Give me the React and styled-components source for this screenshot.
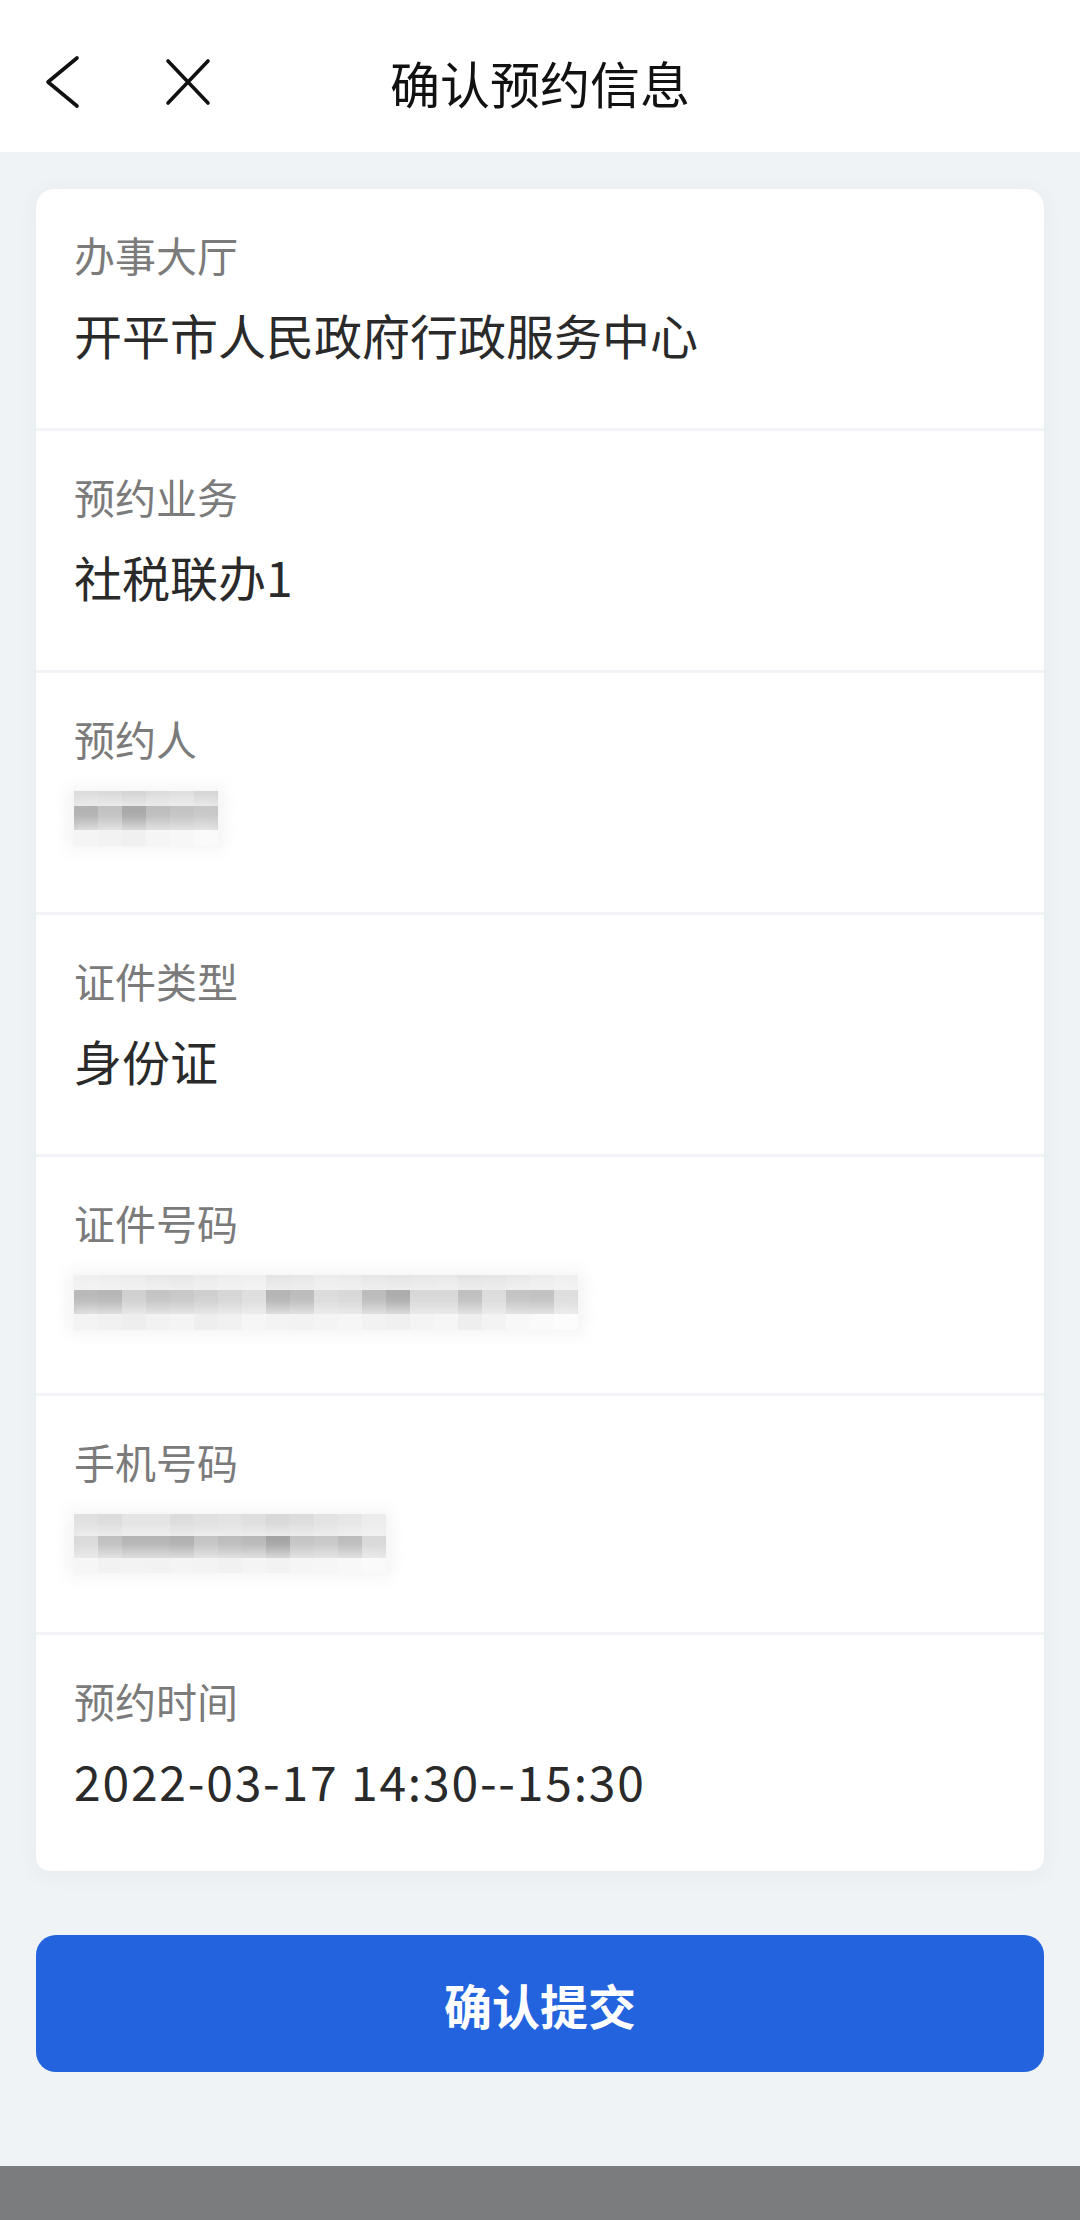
import React from 'react';
import styled, { createGlobalStyle } from 'styled-components';

const GlobalStyle = createGlobalStyle`
  html, body {
    margin: 0;
    padding: 0;
    background: #eff3f6;
  }
  body {
    font-family: "Noto Sans CJK SC", "Noto Sans", sans-serif;
  }
`;

const Page = styled.div`
  width: 1080px;
  min-height: 2220px;
  display: flex;
  flex-direction: column;
  background: #eff3f6;
`;

const Header = styled.header`
  height: 152px;
  box-sizing: border-box;
  padding-top: 12px;
  background: #ffffff;
  display: grid;
  grid-template-columns: 1fr auto 1fr;
  align-items: center;
`;

const NavIcons = styled.div`
  display: flex;
  align-items: center;
  gap: 84px;
  padding-left: 44px;
`;

const Title = styled.h1`
  margin: 0;
  font-size: 50px;
  font-weight: 400;
  color: #111111;
  line-height: 1;
`;

const Main = styled.main`
  flex: 1;
  padding: 37px 36px 0;
  display: flex;
  flex-direction: column;
  gap: 64px;
`;

const Card = styled.section`
  background: #ffffff;
  border-radius: 18px 18px 14px 14px;
  box-shadow: 0 4px 22px rgba(30, 50, 80, 0.05);
  overflow: hidden;
`;

const Row = styled.div`
  padding: 37px 38px ${props => (props.$compact ? '59px' : '62px')};
  border-bottom: ${props => (props.$last ? 'none' : '3px solid #f1f3f6')};
  display: flex;
  flex-direction: column;
  gap: 20px;
`;

const Label = styled.div`
  font-size: 41px;
  line-height: 56px;
  color: #7b7b7b;
`;

const Value = styled.div`
  font-size: 48px;
  line-height: 64px;
  color: #2a2a2a;
  letter-spacing: ${props => (props.$wide ? '1.8px' : '0')};
`;

const MosaicBox = styled.div`
  height: 64px;
  box-sizing: border-box;
  padding-top: 5px;
  display: flex;
  flex-direction: column;
  align-items: flex-start;
`;

const Band = styled.div`
  display: flex;
  height: ${props => props.$h}px;
  box-shadow: 0 0 14px 6px rgba(244, 244, 244, 0.8);
`;

const Cell = styled.div`
  width: 24px;
  height: 100%;
`;

const SubmitButton = styled.button`
  height: 137px;
  border: none;
  border-radius: 20px;
  background: #2363de;
  color: #ffffff;
  font-family: "Noto Sans CJK SC", sans-serif;
  font-size: 48px;
  font-weight: 700;
  cursor: pointer;
`;

const SystemBar = styled.div`
  height: 54px;
  background: #7b7c7e;
`;

const BackIcon = () => (
  <svg width="36" height="54" viewBox="0 0 36 54" fill="none">
    <path d="M33 3 L4 27 L33 51" stroke="#111" strokeWidth="3.6" strokeLinecap="round" strokeLinejoin="round" />
  </svg>
);

const CloseIcon = () => (
  <svg width="48" height="48" viewBox="0 0 48 48" fill="none">
    <path d="M4 3 L44 45 M44 3 L4 45" stroke="#111" strokeWidth="3.6" strokeLinecap="round" />
  </svg>
);

const Mosaic = ({ bands }) => (
  <MosaicBox>
    {bands.map((band, i) => (
      <Band key={i} $h={band.h}>
        {band.shades.map((c, j) => (
          <Cell key={j} style={{ background: c }} />
        ))}
      </Band>
    ))}
  </MosaicBox>
);

const nameMosaic = [
  { h: 15, shades: ['#dadada', '#d8d8d8', '#d2d2d2', '#dadada', '#dedede', '#d4d4d4'] },
  { h: 24, shades: ['#b2b2b2', '#c2c2c2', '#a9a9a9', '#bdbdbd', '#c3c3c3', '#c8c8c8'] },
  { h: 16, shades: ['#f4f4f4', '#f2f2f2', '#f0f0f0', '#f5f5f5', '#f7f7f7', '#fafafa'] },
];

const idMosaic = [
  {
    h: 15,
    shades: ['#f0f0f0', '#eeeeee', '#ececec', '#e8e8e8', '#e6e6e6', '#ebebeb', '#eeeeee', '#f0f0f0', '#e4e4e4', '#e6e6e6', '#ececec', '#eaeaea', '#e6e6e6', '#e4e4e4', '#e6e6e6', '#e8e8e8', '#e2e2e2', '#e4e4e4', '#e8e8e8', '#ececec', '#f0f0f0'],
  },
  {
    h: 24,
    shades: ['#b9b9b9', '#b6b6b6', '#d0d0d0', '#c4c4c4', '#c8c8c8', '#cfcfcf', '#d6d6d6', '#dedede', '#b4b4b4', '#bcbcbc', '#dcdcdc', '#d8d8d8', '#bcbcbc', '#acacac', '#d8d8d8', '#d8d8d8', '#c0c0c0', '#dcdcdc', '#c4c4c4', '#c2c2c2', '#dedede'],
  },
  {
    h: 16,
    shades: ['#f3f3f3', '#f1f1f1', '#eeeeee', '#f2f2f2', '#f4f4f4', '#eeeeee', '#f1f1f1', '#f6f6f6', '#f3f3f3', '#f2f2f2', '#f4f4f4', '#f6f6f6', '#f2f2f2', '#f0f0f0', '#f4f4f4', '#f6f6f6', '#eeeeee', '#f3f3f3', '#f8f8f8', '#fafafa', '#fcfcfc'],
  },
];

const phoneMosaic = [
  {
    h: 24,
    shades: ['#e0e0e0', '#dcdcdc', '#e4e4e4', '#e4e4e4', '#dcdcdc', '#e0e0e0', '#e2e2e2', '#dedede', '#d8d8d8', '#dcdcdc', '#e2e2e2', '#e6e6e6', '#ececec'],
  },
  {
    h: 24,
    shades: ['#dadada', '#c0c0c0', '#b4b4b4', '#b4b4b4', '#b0b0b0', '#c4c4c4', '#bcbcbc', '#b8b8b8', '#a4a4a4', '#c4c4c4', '#c8c8c8', '#bcbcbc', '#d8d8d8'],
  },
  {
    h: 16,
    shades: ['#f6f6f6', '#f2f2f2', '#f3f3f3', '#f2f2f2', '#f4f4f4', '#f3f3f3', '#f1f1f1', '#f4f4f4', '#f2f2f2', '#f5f5f5', '#f6f6f6', '#f8f8f8', '#fafafa'],
  },
];

const rows = [
  { label: '办事大厅', value: '开平市人民政府行政服务中心' },
  { label: '预约业务', value: '社税联办1' },
  { label: '预约人', mosaic: nameMosaic },
  { label: '证件类型', value: '身份证' },
  { label: '证件号码', mosaic: idMosaic, compact: true },
  { label: '手机号码', mosaic: phoneMosaic, compact: true },
  { label: '预约时间', value: '2022-03-17 14:30--15:30', wide: true, compact: true },
];

const App = () => {
  return (
    <Page>
      <GlobalStyle />
      <Header>
        <NavIcons>
          <BackIcon />
          <CloseIcon />
        </NavIcons>
        <Title>确认预约信息</Title>
        <div />
      </Header>

      <Main>
        <Card>
          {rows.map((row, i) => (
            <Row key={row.label} $last={i === rows.length - 1} $compact={row.compact}>
              <Label>{row.label}</Label>
              {row.mosaic ? (
                <Mosaic bands={row.mosaic} />
              ) : (
                <Value $wide={row.wide}>{row.value}</Value>
              )}
            </Row>
          ))}
        </Card>
        <SubmitButton>确认提交</SubmitButton>
      </Main>

      <SystemBar />
    </Page>
  );
};

export default App;
